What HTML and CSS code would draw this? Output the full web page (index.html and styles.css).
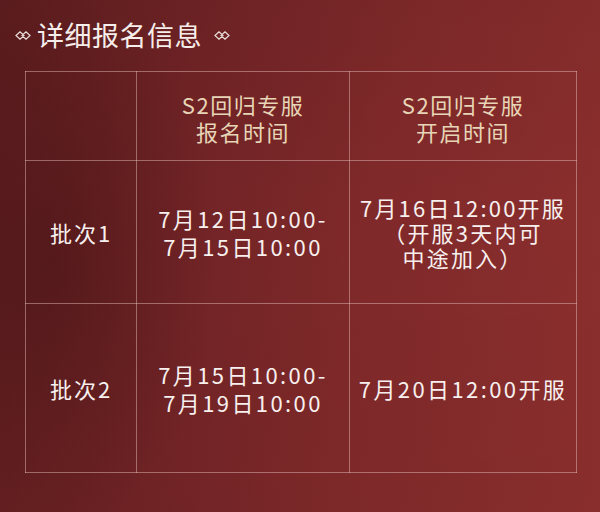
FILE: index.html
```html
<!DOCTYPE html>
<html lang="zh-CN">
<head>
<meta charset="utf-8">
<link rel="stylesheet" href="styles.css">
</head>
<body>
<div class="page">
  <div class="shade"></div>
  <h1 class="title">
    <svg class="orn" viewBox="0 0 16 9" width="16" height="9"><path d="M1 4.5 L5 0.8 L9 4.5 L5 8.2 Z M7 4.5 L11 0.8 L15 4.5 L11 8.2 Z" fill="none" stroke="#e9ddd8" stroke-width="1.2"/></svg>
    <span>详细报名信息</span>
    <svg class="orn" viewBox="0 0 16 9" width="16" height="9"><path d="M1 4.5 L5 0.8 L9 4.5 L5 8.2 Z M7 4.5 L11 0.8 L15 4.5 L11 8.2 Z" fill="none" stroke="#e9ddd8" stroke-width="1.2"/></svg>
  </h1>
  <table class="info">
    <colgroup><col class="c1"><col class="c2"><col class="c3"></colgroup>
    <tr class="head">
      <td></td>
      <td>S2回归专服<br>报名时间</td>
      <td>S2回归专服<br>开启时间</td>
    </tr>
    <tr class="r1">
      <td class="batch">批次1</td>
      <td class="dt">7月12日10:00-<br>7月15日10:00</td>
      <td class="dt tight">7月16日12:00开服<br>（开服3天内可<br>中途加入）</td>
    </tr>
    <tr class="r2">
      <td class="batch">批次2</td>
      <td class="dt">7月15日10:00-<br>7月19日10:00</td>
      <td class="dt">7月20日12:00开服</td>
    </tr>
  </table>
</div>
</body>
</html>
```

FILE: styles.css
```css
html, body {
  margin: 0;
  padding: 0;
}
body {
  width: 600px;
  height: 512px;
  overflow: hidden;
  font-family: "Noto Sans CJK SC", "Noto Sans", sans-serif;
}
.page {
  position: relative;
  width: 600px;
  height: 512px;
  background:
    radial-gradient(ellipse 240px 400px at 50px 260px, rgba(40, 8, 10, 0.28), rgba(40, 8, 10, 0) 70%),
    linear-gradient(100deg, #5f1d1f 0%, #702325 30%, #80292a 60%, #8d2f2e 100%);
  overflow: hidden;
}
.shade {
  position: absolute;
  left: 0;
  top: 0;
  width: 600px;
  height: 512px;
  background:
    linear-gradient(180deg, rgba(0, 0, 0, 0.04) 0%, rgba(0, 0, 0, 0) 40%, rgba(0, 0, 0, 0.03) 100%);
  pointer-events: none;
}
.title {
  position: relative;
  margin: 0;
  height: 71px;
  padding-left: 15px;
  display: flex;
  align-items: center;
  gap: 6px;
  padding-bottom: 3px;
  box-sizing: border-box;
  font-size: 27px;
  font-weight: 400;
  color: #f6eeea;
  letter-spacing: 0.5px;
}
.title span {
  line-height: 1;
}
.title .orn {
  display: block;
  flex: none;
  margin-top: 2px;
}
.title .orn:last-child {
  margin-left: 6px;
}
.info {
  position: relative;
  margin-left: 25px;
  border-collapse: collapse;
  width: 551px;
  table-layout: fixed;
}
.info col.c1 { width: 111px; }
.info col.c2 { width: 213px; }
.info col.c3 { width: 227px; }
.info td {
  border: 1px solid rgba(235, 200, 195, 0.45);
  text-align: center;
  vertical-align: middle;
  padding: 0;
  color: #f7f0ee;
  font-size: 22px;
  line-height: 28px;
  letter-spacing: 1px;
}
.info tr.head td {
  height: 84px;
  color: #e7d5b6;
  letter-spacing: 1.5px;
  line-height: 27px;
  padding-top: 4px;
}
.info tr.r1 td {
  height: 142px;
}
.info tr.r2 td {
  height: 168px;
}
.info td.batch {
  letter-spacing: 2px;
}
.info td.dt {
  letter-spacing: 2.4px;
}
.info td.tight {
  line-height: 25px;
  letter-spacing: 2.2px;
}
```
